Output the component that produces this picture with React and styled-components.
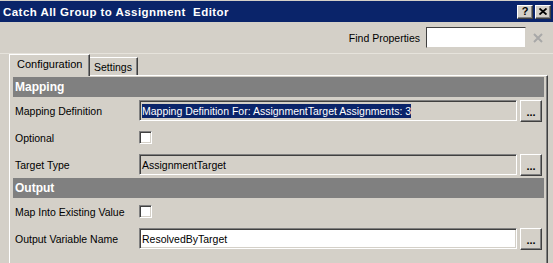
import React from "react";
import styled, { createGlobalStyle } from "styled-components";

const GlobalStyle = createGlobalStyle`
* {
  box-sizing: border-box;
  padding: 0;
  margin: 0;
}
body {
  background: #d4d0c8;
  font-family: "Liberation Sans", Arial, sans-serif;
  font-size: 10.5px;
  color: #000;
}
`

const Window = styled.div`
  width: 553px;
  height: 263px;
  overflow: hidden;
  padding-top: 1px;
  background: #d4d0c8;
`

const TitleBar = styled.div`
  height: 21px;
  background: #0a246a;
  color: #fff;
  font-weight: bold;
  font-size: 11.5px;
  letter-spacing: 0.45px;
  display: flex;
  align-items: center;
  justify-content: space-between;
  padding: 0 2px 0 3px;
  white-space: pre;
`

const CaptionButtons = styled.div`
  display: flex;
  gap: 2px;
  letter-spacing: 0;
`

const CaptionButton = styled.div`
  width: 16px;
  height: 14px;
  background: #d4d0c8;
  border: 1px solid;
  border-color: #fff #404040 #404040 #fff;
  box-shadow: inset -1px -1px #808080;
  color: #000;
  font-size: 11px;
  font-weight: bold;
  display: flex;
  align-items: center;
  justify-content: center;
  line-height: 1;
`

const FindBar = styled.div`
  height: 32px;
  display: flex;
  align-items: center;
  justify-content: flex-end;
  padding-right: 8px;
  border-bottom: 1px solid #e6e3dc;
`

const FindLabel = styled.span`
  margin-right: 6px;
`

const FindInput = styled.div`
  width: 100px;
  height: 21px;
  background: #fff;
  border: 1px solid;
  border-color: #404040 #d4d0c8 #d4d0c8 #404040;
  margin-right: 5px;
`

const ClearIcon = styled.svg`
  width: 14px;
  height: 14px;
  display: block;
`

const TabStrip = styled.div`
  height: 21px;
  display: flex;
  align-items: flex-end;
  padding-left: 9px;
`

const Tab = styled.div`
  height: ${p => (p.$active ? "22px" : "18px")};
  width: ${p => p.$w}px;
  margin-bottom: ${p => (p.$active ? "-1px" : "0")};
  position: relative;
  z-index: ${p => (p.$active ? 1 : 0)};
  background: #d4d0c8;
  border-left: ${p => (p.$active ? "1px solid #fff" : "none")};
  border-top: 1px solid #fff;
  border-right: 1px solid #404040;
  box-shadow: inset -1px 0 #808080;
  padding: ${p => (p.$active ? "3px 0 0 7px" : "3px 0 0 4px")};
  font-size: ${p => (p.$active ? "11px" : "10.5px")};
`

const Panel = styled.div`
  margin-left: 9px;
  width: 539px;
  height: 200px;
  border-left: 1px solid #fff;
  border-top: 1px solid #fff;
  border-right: 1px solid #404040;
  box-shadow: inset -1px 0 #808080;
  padding: 1px 3px 0 3px;
`

const SectionHeader = styled.div`
  height: 20px;
  background: #808080;
  color: #fff;
  font-weight: bold;
  font-size: 12px;
  display: flex;
  align-items: center;
  padding-left: 2px;
`

const Row = styled.div`
  height: 27px;
  display: grid;
  grid-template-columns: 123px 1fr 22px;
  column-gap: 3px;
  align-items: center;
  padding-right: 2px;
`

const Label = styled.span`
  padding-left: 2px;
  white-space: nowrap;
`

const Field = styled.div`
  height: 21px;
  background: ${p => (p.$white ? "#fff" : "#d4d0c8")};
  border: 1px solid;
  border-color: #808080 #fff #fff #808080;
  box-shadow: inset 1px 1px #404040, inset -1px -1px #d4d0c8;
  display: flex;
  align-items: center;
  padding-left: 2px;
  white-space: nowrap;
  overflow: hidden;
`

const Selected = styled.span`
  background: #0a246a;
  color: #fff;
  padding: 1px 0;
`

const DotsButton = styled.div`
  height: 22px;
  background: #d4d0c8;
  border: 1px solid;
  border-color: #fff #404040 #404040 #fff;
  box-shadow: inset -1px -1px #808080;
  display: flex;
  align-items: flex-end;
  justify-content: center;
  font-weight: bold;
  font-size: 11px;
  line-height: 1;
  padding-bottom: 3px;
`

const CheckBox = styled.div`
  width: 13px;
  height: 13px;
  background: #fff;
  border: 1px solid;
  border-color: #808080 #fff #fff #808080;
  box-shadow: inset 1px 1px #404040, inset -1px -1px #d4d0c8;
`

const App = () => {
  return (
    <Window>
      <GlobalStyle />

      <TitleBar>
        <span>Catch All Group to Assignment  Editor</span>
        <CaptionButtons>
          <CaptionButton>?</CaptionButton>
          <CaptionButton>
            <svg width="8" height="7" viewBox="0 0 8 7">
              <path d="M0.5 0.5 L7.5 6.5 M7.5 0.5 L0.5 6.5" stroke="#000" strokeWidth="1.8" />
            </svg>
          </CaptionButton>
        </CaptionButtons>
      </TitleBar>

      <FindBar>
        <FindLabel>Find Properties</FindLabel>
        <FindInput />
        <ClearIcon viewBox="0 0 14 14">
          <path d="M3 3 L11 11 M11 3 L3 11" stroke="#a8a8a8" strokeWidth="2" />
        </ClearIcon>
      </FindBar>

      <TabStrip>
        <Tab $active $w={81}>Configuration</Tab>
        <Tab $w={48}>Settings</Tab>
      </TabStrip>

      <Panel>
        <SectionHeader>Mapping</SectionHeader>
        <Row>
          <Label>Mapping Definition</Label>
          <Field>
            <Selected>Mapping Definition For: AssignmentTarget Assignments: 3</Selected>
          </Field>
          <DotsButton>...</DotsButton>
        </Row>
        <Row>
          <Label>Optional</Label>
          <CheckBox />
        </Row>
        <Row>
          <Label>Target Type</Label>
          <Field>AssignmentTarget</Field>
          <DotsButton>...</DotsButton>
        </Row>

        <SectionHeader>Output</SectionHeader>
        <Row>
          <Label>Map Into Existing Value</Label>
          <CheckBox />
        </Row>
        <Row>
          <Label>Output Variable Name</Label>
          <Field $white>ResolvedByTarget</Field>
          <DotsButton>...</DotsButton>
        </Row>
      </Panel>
    </Window>
  );
}

export default App;
